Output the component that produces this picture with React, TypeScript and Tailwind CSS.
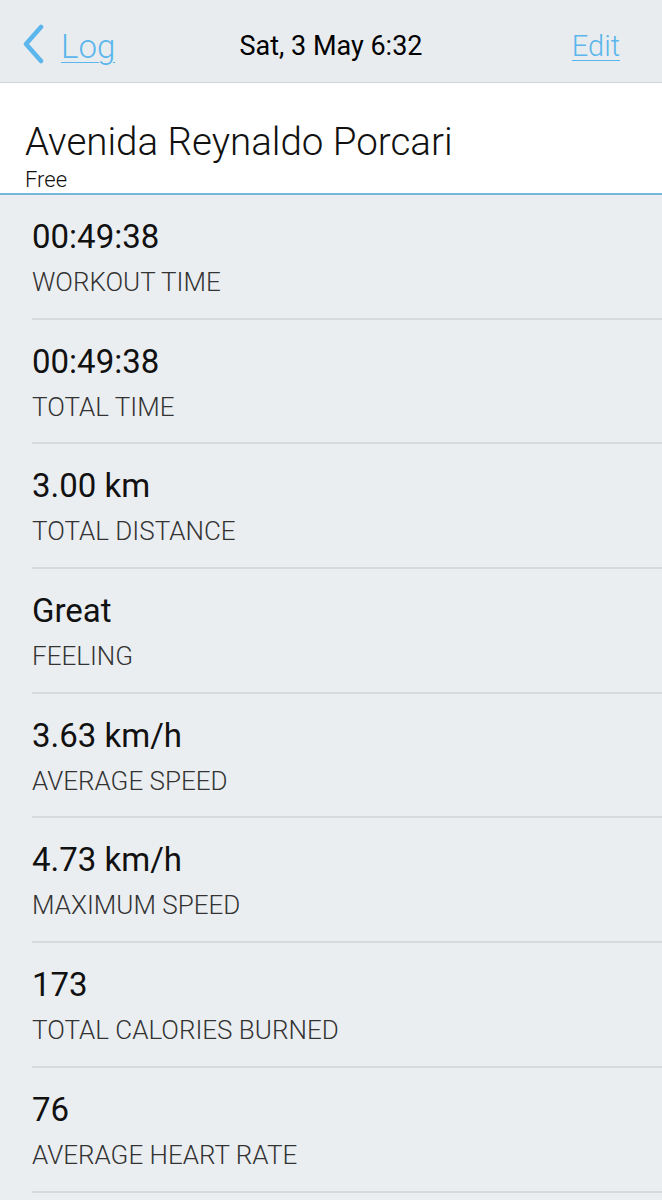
import React from "react";

const rows = [
  ["00:49:38", "WORKOUT TIME"],
  ["00:49:38", "TOTAL TIME"],
  ["3.00 km", "TOTAL DISTANCE"],
  ["Great", "FEELING"],
  ["3.63 km/h", "AVERAGE SPEED"],
  ["4.73 km/h", "MAXIMUM SPEED"],
  ["173", "TOTAL CALORIES BURNED"],
  ["76", "AVERAGE HEART RATE"],
];

export default function App() {
  return (
    <div className="w-[662px] h-[1200px] overflow-hidden bg-[#ebeef1] font-['Roboto',sans-serif]">
      <header className="h-[83px] bg-[#e9ecef] border-b border-[#d3d6d9] flex items-center px-[16px] pt-[10px] relative">
        <div className="flex items-center gap-[17px]">
          <svg width="26" height="40" viewBox="0 0 26 40" className="ml-[2px] mt-[-4px]">
            <path d="M23 3 L8 20 L23 37" fill="none" stroke="#5ab6ec" strokeWidth="4.5" strokeLinecap="round" strokeLinejoin="round" />
          </svg>
          <span className="text-[33px] text-[#5ab6ec] underline underline-offset-[4px] decoration-[1px] font-light leading-none">Log</span>
        </div>
        <div className="absolute left-0 right-0 text-center text-[27px] text-black pointer-events-none leading-none">Sat, 3 May 6:32</div>
        <span className="ml-auto mr-[26px] text-[29px] text-[#5ab6ec] underline underline-offset-[4px] decoration-[1px] font-light leading-none">Edit</span>
      </header>
      <section className="bg-white h-[112px] border-b-2 border-[#78b6dc] px-[25px] pt-[39px]">
        <div className="text-[38.5px] font-light text-[#111] leading-[40px]">Avenida Reynaldo Porcari</div>
        <div className="text-[22px] text-[#111] leading-[24px] font-light mt-[6px]">Free</div>
      </section>
      <div className="pl-[32px]">
        {rows.map(([v, l], i) => (
          <div key={i} className="h-[124.7px] border-b-2 border-[#d6dadd] pt-[23px]">
            <div className="text-[33px] text-[#111] leading-[38px]">{v}</div>
            <div className="text-[26px] font-light text-[#333] leading-[30px] mt-[11px]">{l}</div>
          </div>
        ))}
      </div>
    </div>
  );
}
